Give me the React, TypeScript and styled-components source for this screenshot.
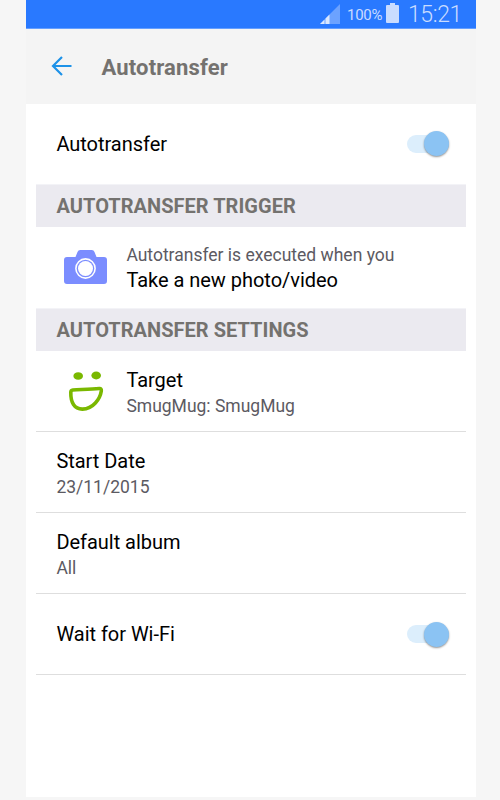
import React from "react";
import styled, { createGlobalStyle } from "styled-components";

const GlobalStyle = createGlobalStyle`
  * { box-sizing: border-box; }
  body { margin: 0; background: #f6f6f6; font-family: Roboto, sans-serif; }
`;

const Page = styled.div`
  height: 800px;
  padding: 0 24px 3px 26px;
  background: #f6f6f6;
  overflow: hidden;
`;

const Phone = styled.main`
  height: 797px;
  background: #fff;
  display: flex;
  flex-direction: column;
`;

const StatusBar = styled.div`
  height: 29px;
  flex: none;
  display: flex;
  align-items: flex-start;
  justify-content: flex-end;
  padding-right: 15px;
  background: #2979ff;
  border-bottom: 1px solid #659fff;
  color: #c9dcff;
`;

const SignalIcon = styled.svg`
  width: 20px;
  height: 20px;
  margin: 4px 7px 0 0;
`;

const BatteryIcon = styled.svg`
  width: 13px;
  height: 20px;
  margin: 3px 9px 0 4px;
`;

const Percent = styled.span`
  font-size: 15px;
  line-height: 18px;
  width: 35px;
  margin-top: 6px;
  letter-spacing: -0.3px;
  white-space: nowrap;
`;

const Clock = styled.span`
  font-size: 23px;
  font-weight: 300;
  line-height: 28px;
  width: 53px;
  margin-top: 1px;
  letter-spacing: -0.4px;
  white-space: nowrap;
`;

const AppBar = styled.header`
  height: 75px;
  flex: none;
  display: flex;
  align-items: center;
  padding-left: 24.5px;
  background: #f4f4f4;
`;

const BackIcon = styled.svg`
  width: 21px;
  height: 20px;
  margin: 0 30px 1px 0;
`;

const Title = styled.h1`
  margin: 0;
  padding-top: 2px;
  font-size: 22px;
  line-height: 28px;
  font-weight: 700;
  letter-spacing: 0.15px;
  color: #74726f;
`;

const Content = styled.div`
  padding: 0 10px;
`;

const SectionHeader = styled.h2`
  margin: 0;
  height: 43px;
  padding: 0 20px 0 20.5px;
  display: flex;
  align-items: center;
  background: #ebeaf0;
  border-top: 1px solid #f3f3f7;
  color: #74726f;
  font-size: 20px;
  font-weight: 700;
  letter-spacing: 0.03px;
`;

const Row = styled.div<{ $line?: boolean }>`
  height: 81px;
  padding: 0 16px 0 20.4px;
  display: flex;
  align-items: center;
  border-bottom: 1px solid ${(p) => (p.$line ? "#dedede" : "transparent")};
`;

const FirstRow = styled(Row)`
  height: 80px;
`;

const IconSlot = styled.div`
  width: 70px;
  height: 44px;
  flex: none;
  padding-left: 7.6px;
  svg { display: block; }
`;

const Lines = styled.div<{ $drop?: number }>`
  flex: 1;
  padding-top: ${(p) => p.$drop ?? 0}px;
  white-space: nowrap;
`;

const Primary = styled.div`
  font-size: 20px;
  line-height: 26px;
  color: #000;
  letter-spacing: -0.03px;
`;

const Secondary = styled.div`
  height: 25px;
  padding-top: 1px;
  font-size: 17.5px;
  line-height: 25px;
  color: #5c5a62;
`;

const Track = styled.div`
  width: 42px;
  height: 18px;
  border-radius: 9px;
  background: #dceefc;
  display: flex;
  align-items: center;
  justify-content: flex-end;
  margin-right: 1px;
`;

const Thumb = styled.div`
  width: 25px;
  height: 25px;
  flex: none;
  border-radius: 50%;
  background: #8bc3f3;
  box-shadow: 0 1px 2px rgba(0, 0, 0, 0.42);
`;

const Toggle = () => (
  <Track role="switch" aria-checked="true">
    <Thumb />
  </Track>
);

const Camera = () => (
  <svg width="44" height="44" viewBox="0 0 44 44">
    <path
      d="M3 12H11.5L13.5 7Q14.2 5 16.2 5H27.8Q29.8 5 30.5 7L32.5 12H40Q43 12 43 15V36Q43 39 40 39H3Q0 39 0 36V15Q0 12 3 12Z"
      fill="#7b8dff"
    />
    <circle cx="21.5" cy="23.5" r="9.6" fill="none" stroke="#fff" strokeWidth="1.6" />
    <circle cx="21.5" cy="23.5" r="7.5" fill="#fff" />
  </svg>
);

const Smile = () => (
  <svg width="44" height="44" viewBox="0 0 44 44">
    <ellipse cx="14.2" cy="7" rx="4.8" ry="3.8" fill="#7ab800" />
    <ellipse cx="32.2" cy="6.5" rx="4.8" ry="3.9" fill="#7ab800" />
    <path
      d="M8.8 21C17 20.5 27 20.4 35.3 19.5Q37.7 19.3 37.3 22C36.1 30 29 40 18.5 40.1C10.2 40.2 6.6 33.4 6.8 23.4Q6.8 21.2 8.8 21Z"
      fill="none"
      stroke="#7ab800"
      strokeWidth="3.6"
      strokeLinejoin="round"
    />
  </svg>
);

export default function App() {
  return (
    <Page>
      <GlobalStyle />
      <Phone>
        <StatusBar>
          <SignalIcon viewBox="0 0 20 20">
            <path d="M0 20L20 0V20Z" fill="#6ca2ff" />
            <path d="M0 20L4.5 15.5V20ZM5.5 20V14.5L9.5 10.5V20Z" fill="#d9e7ff" />
          </SignalIcon>
          <Percent>100%</Percent>
          <BatteryIcon viewBox="0 0 13 20">
            <path d="M4 0H9V2H12Q13 2 13 3V19Q13 20 12 20H1Q0 20 0 19V3Q0 2 1 2H4Z" fill="#c9dcff" />
          </BatteryIcon>
          <Clock>15:21</Clock>
        </StatusBar>
        <AppBar>
          <BackIcon viewBox="0 0 21 20" fill="none" stroke="#1d92e8" strokeWidth="2.2">
            <path d="M11 1L2 10L11 19M2 10H20.5" />
          </BackIcon>
          <Title>Autotransfer</Title>
        </AppBar>
        <Content>
          <FirstRow>
            <Lines $drop={1}><Primary>Autotransfer</Primary></Lines>
            <Toggle />
          </FirstRow>
          <SectionHeader>AUTOTRANSFER TRIGGER</SectionHeader>
          <Row>
            <IconSlot><Camera /></IconSlot>
            <Lines $drop={1}>
              <Secondary>Autotransfer is executed when you</Secondary>
              <Primary>Take a new photo/video</Primary>
            </Lines>
          </Row>
          <SectionHeader>AUTOTRANSFER SETTINGS</SectionHeader>
          <Row $line>
            <IconSlot><Smile /></IconSlot>
            <Lines $drop={2}>
              <Primary>Target</Primary>
              <Secondary>SmugMug: SmugMug</Secondary>
            </Lines>
          </Row>
          <Row $line>
            <Lines $drop={2}>
              <Primary>Start Date</Primary>
              <Secondary>23/11/2015</Secondary>
            </Lines>
          </Row>
          <Row $line>
            <Lines $drop={2}>
              <Primary>Default album</Primary>
              <Secondary>All</Secondary>
            </Lines>
          </Row>
          <Row $line>
            <Lines><Primary>Wait for Wi-Fi</Primary></Lines>
            <Toggle />
          </Row>
        </Content>
      </Phone>
    </Page>
  );
}
